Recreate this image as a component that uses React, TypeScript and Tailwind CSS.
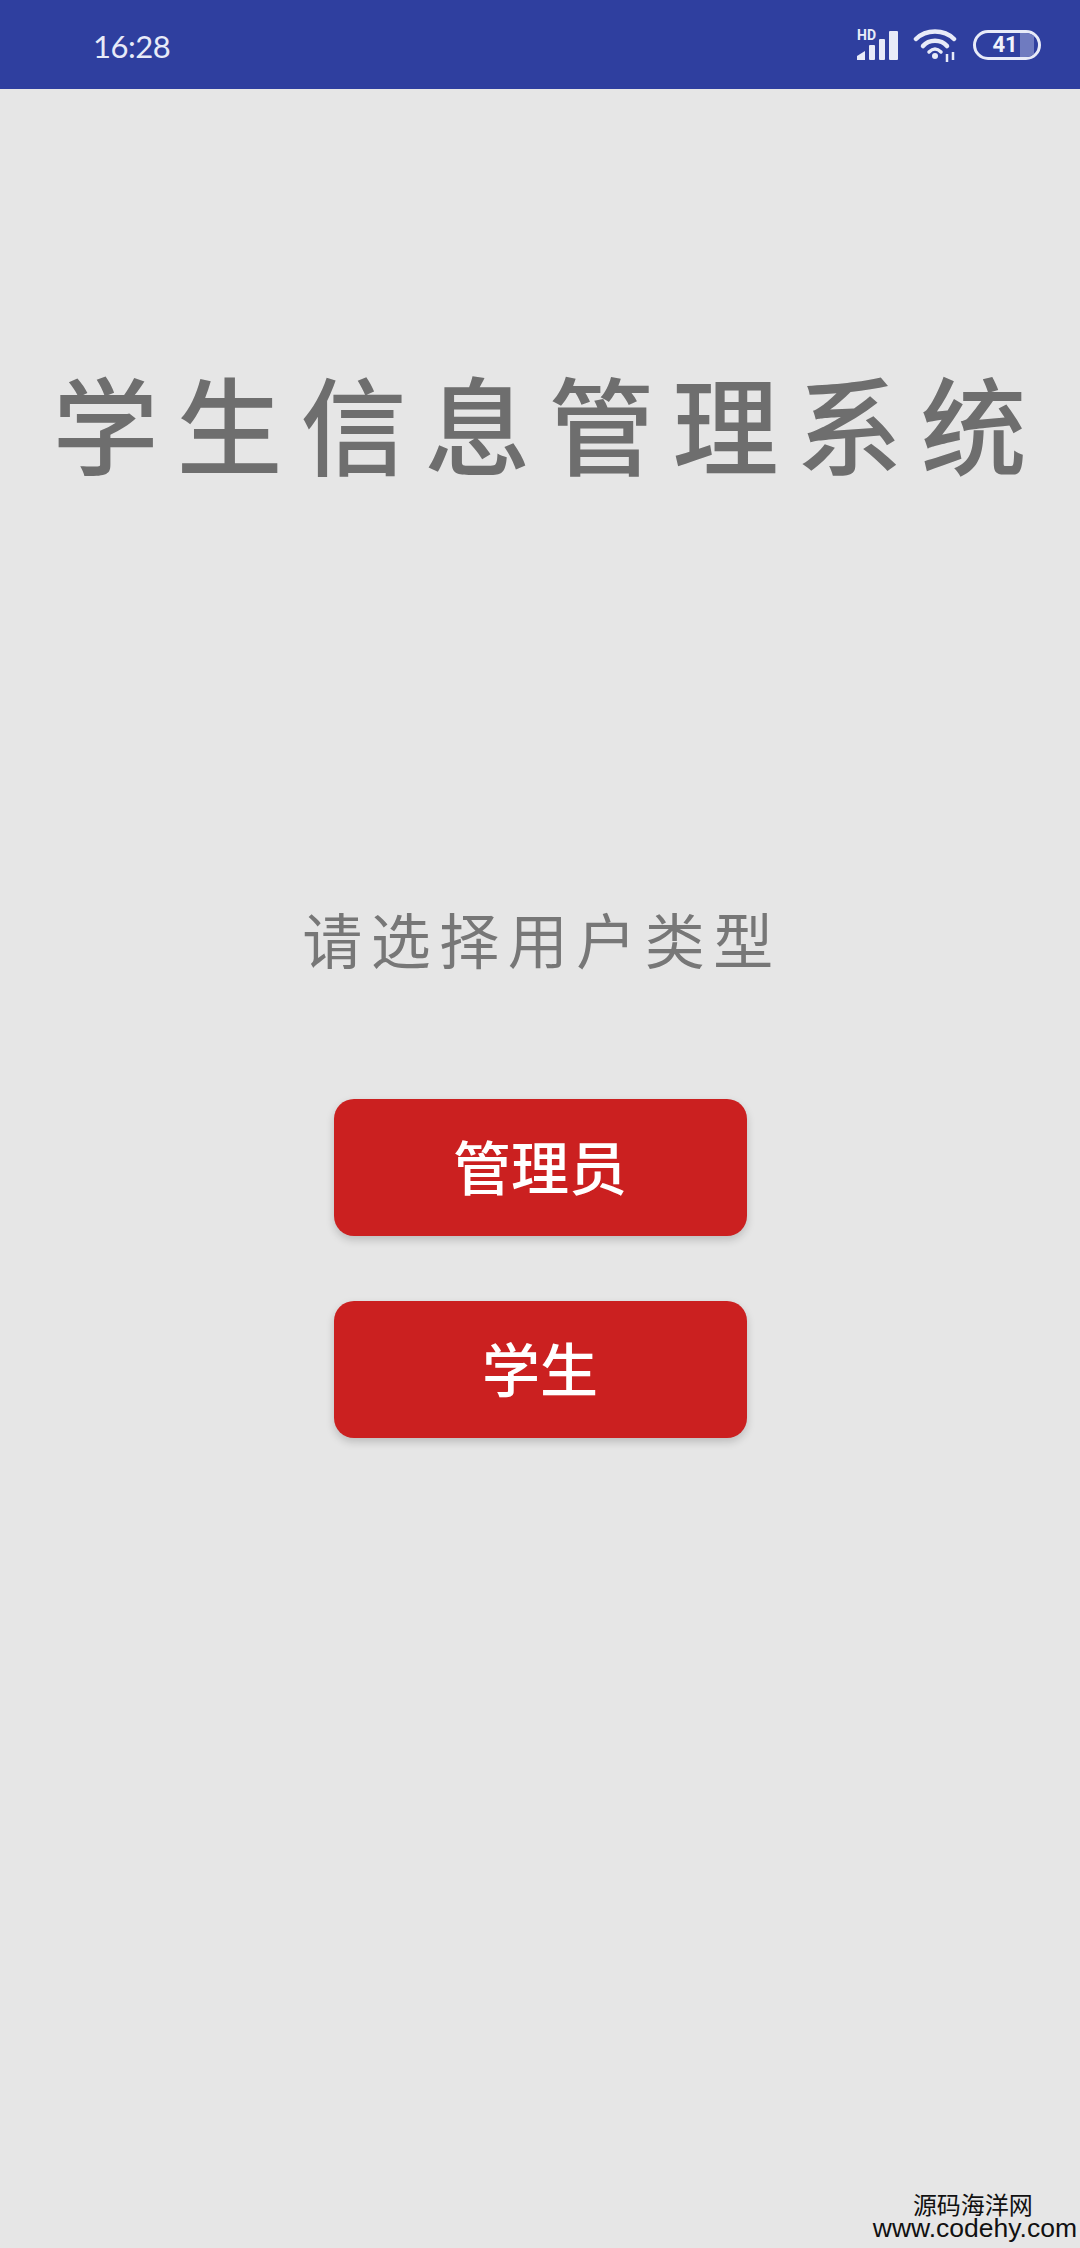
import React from "react";

const cjk = "font-['Noto_Sans_CJK_SC','Noto_Sans',sans-serif]";

function Signal() {
  return (
    <svg width="42" height="36" viewBox="0 0 42 36" className="block" fill="#e8ebf8">
      <text x="0" y="13" fontSize="14" fontWeight="700" fontFamily="Roboto, sans-serif">HD</text>
      <path d="M0 33 L0 29 L8 24 L8 33 Z" />
      <rect x="12" y="18" width="6" height="15" rx="1" />
      <rect x="22" y="12" width="6" height="21" rx="1" />
      <rect x="32" y="4" width="9" height="29" rx="1" />
    </svg>
  );
}

function Wifi() {
  return (
    <svg width="46" height="36" viewBox="0 0 46 36" className="block" fill="none" stroke="#e8ebf8" strokeLinecap="round">
      <path d="M3 12 C13 2 31 2 41 12" strokeWidth="4.5" />
      <path d="M10 19 C16 12 28 12 34 19" strokeWidth="4.5" />
      <path d="M16 25 C20 21 24 21 28 25" strokeWidth="3.5" />
      <circle cx="22" cy="29" r="3" fill="#e8ebf8" stroke="none" />
      <path d="M34 27 V35 M40 25 V33" strokeWidth="2.5" strokeLinecap="butt" />
    </svg>
  );
}

function Battery() {
  return (
    <div className="relative w-[68px] h-[30px] rounded-full border-[3px] border-[#e8ebf8] overflow-hidden flex items-center justify-center">
      <div className="absolute left-[44px] top-0 bottom-0 w-[14px] bg-[#6f7bc0]" />
      <span className="relative text-[#f0f2fb] text-[22px] leading-none font-bold font-['Roboto',sans-serif] -ml-1">41</span>
    </div>
  );
}

function RedButton({ label }: { label: string }) {
  return (
    <button className={`w-[413px] h-[137px] pb-[6px] rounded-[20px] bg-[#cb2020] text-white text-[58px] leading-none font-medium shadow-[0_4px_8px_rgba(0,0,0,0.18)] flex items-center justify-center ${cjk}`}>
      {label}
    </button>
  );
}

export default function App() {
  return (
    <div className={`w-[1080px] h-[2248px] bg-[#e6e6e6] flex flex-col overflow-hidden ${cjk}`}>
      <div className="h-[89px] shrink-0 bg-[#2f3f9f] flex items-center justify-between pl-[93px] pr-[39px]">
        <span className="pt-[3px] text-[#e8ebf8] text-[31px] leading-none tracking-[-0.5px] font-['Lato',sans-serif]">16:28</span>
        <div className="flex items-center gap-[14px]">
          <Signal />
          <Wifi />
          <Battery />
        </div>
      </div>

      <h1 className="mt-[268px] pl-[17px] text-center text-[#6e6e6e] text-[106px] leading-[128px] tracking-[18px] font-medium whitespace-nowrap">
        学生信息管理系统
      </h1>

      <p className="mt-[413px] pl-[4px] text-center text-[#777777] text-[60px] leading-[80px] tracking-[8.5px] font-normal">
        请选择用户类型
      </p>

      <div className="mt-[121px] flex flex-col items-center gap-[65px]">
        <RedButton label="管理员" />
        <RedButton label="学生" />
      </div>

      <div className="mt-auto self-end pr-[3px] pb-[9px] flex flex-col items-center text-[#111111]">
        <span className="text-[24px] leading-[26px] pr-[4px]">源码海洋网</span>
        <span className="text-[26.5px] leading-[22px] font-['Liberation_Sans',sans-serif]">www.codehy.com</span>
      </div>
    </div>
  );
}
